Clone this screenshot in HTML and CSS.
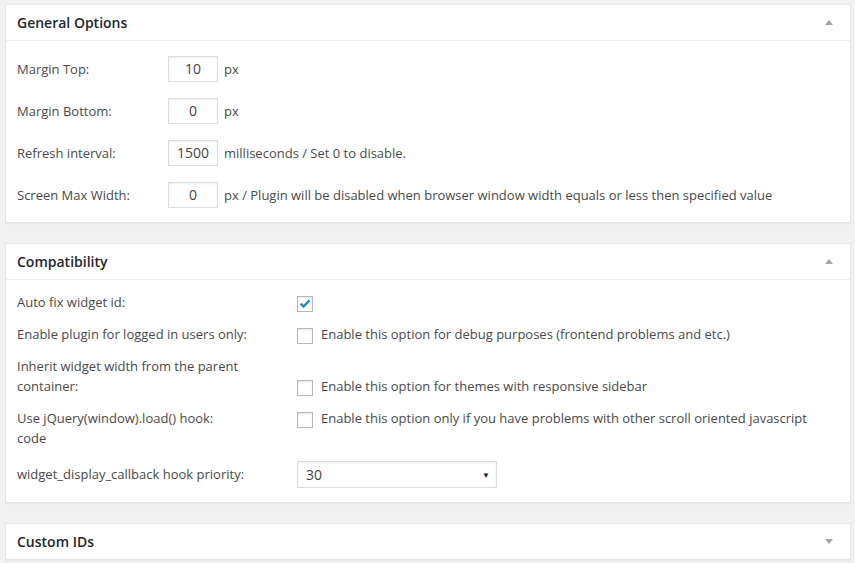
FILE: index.html
```html
<!DOCTYPE html>
<html>
<head>
<meta charset="utf-8">
<link rel="stylesheet" href="styles.css">
</head>
<body>
<div class="wrap">
  <div class="postbox">
    <div class="hndle">
      <span class="title">General Options</span>
      <span class="toggle up"></span>
    </div>
    <div class="inside general">
      <div class="label">Margin Top:</div>
      <div class="field"><span class="input">10</span><span class="note">px</span></div>
      <div class="label">Margin Bottom:</div>
      <div class="field"><span class="input">0</span><span class="note">px</span></div>
      <div class="label">Refresh interval:</div>
      <div class="field"><span class="input">1500</span><span class="note">milliseconds / Set 0 to disable.</span></div>
      <div class="label">Screen Max Width:</div>
      <div class="field"><span class="input">0</span><span class="note">px / Plugin will be disabled when browser window width equals or less then specified value</span></div>
    </div>
  </div>

  <div class="postbox">
    <div class="hndle">
      <span class="title">Compatibility</span>
      <span class="toggle up"></span>
    </div>
    <div class="inside compat">
      <div class="label">Auto fix widget id:</div>
      <div class="field"><span class="chk checked"><svg width="16" height="16" viewBox="0 0 16 16"><path d="M3.6 7.6 L6.6 10.6 L12.6 4.2" fill="none" stroke="#1e8cbe" stroke-width="2.4"/></svg></span></div>
      <div class="label">Enable plugin for logged in users only:</div>
      <div class="field"><span class="chk"></span><span class="desc">Enable this option for debug purposes (frontend problems and etc.)</span></div>
      <div class="label">Inherit widget width from the parent<br>container:</div>
      <div class="field end"><span class="chk"></span><span class="desc">Enable this option for themes with responsive sidebar</span></div>
      <div class="label">Use jQuery(window).load() hook:<br>code</div>
      <div class="field start"><span class="chk"></span><span class="desc">Enable this option only if you have problems with other scroll oriented javascript</span></div>
      <div class="label">widget_display_callback hook priority:</div>
      <div class="field"><div class="select"><span class="value">30</span><span class="caret">&#9660;</span></div></div>
    </div>
  </div>

  <div class="postbox closed">
    <div class="hndle">
      <span class="title">Custom IDs</span>
      <span class="toggle down"></span>
    </div>
  </div>
</div>
</body>
</html>
```

FILE: styles.css
```css
html, body {
  margin: 0;
  padding: 0;
  background: #f1f1f1;
}
body {
  font-family: "Open Sans", "Noto Sans", sans-serif;
  font-size: 13px;
  color: #4a4a4a;
}
.wrap {
  padding: 4px 4px 0 5px;
}
.postbox {
  background: #fff;
  border: 1px solid #e5e5e5;
  box-shadow: 0 1px 1px rgba(0,0,0,0.04);
  margin-bottom: 20px;
}
.hndle {
  height: 35px;
  display: flex;
  align-items: center;
  justify-content: space-between;
  padding: 0 12px 0 11px;
  border-bottom: 1px solid #eee;
}
.postbox.closed .hndle {
  border-bottom: none;
}
.title {
  font-size: 14px;
  font-weight: 600;
  color: #23282d;
}
.toggle {
  width: 0;
  height: 0;
  border-left: 4.5px solid transparent;
  border-right: 4.5px solid transparent;
  margin-right: 5px;
}
.toggle.up {
  border-bottom: 5px solid #a0a5aa;
}
.toggle.down {
  border-top: 5px solid #a0a5aa;
}
.inside {
  display: grid;
  align-items: center;
  line-height: 20px;
}
.inside.general {
  grid-template-columns: 151px 1fr;
  grid-auto-rows: 42px;
  padding: 7px 11px 6px 11px;
}
.inside.compat {
  grid-template-columns: 280px 1fr;
  row-gap: 12px;
  padding: 12px 11px 14px 11px;
}
.field {
  display: flex;
  align-items: center;
}
.field.end { align-self: end; }
.field.start { align-self: start; }
.input {
  box-sizing: border-box;
  width: 50px;
  height: 26px;
  border: 1px solid #ddd;
  box-shadow: inset 0 1px 2px rgba(0,0,0,0.07);
  text-align: center;
  line-height: 24px;
  font-size: 14px;
  color: #444;
}
.note {
  margin-left: 6px;
}
.chk {
  box-sizing: border-box;
  width: 16px;
  height: 16px;
  border: 1px solid #b4b9be;
  box-shadow: inset 0 1px 2px rgba(0,0,0,0.1);
  margin-top: 3px;
  flex: none;
  position: relative;
}
.chk svg {
  position: absolute;
  left: -1px;
  top: -1px;
}
.desc {
  margin-left: 8px;
}
.select {
  box-sizing: border-box;
  width: 200px;
  height: 27px;
  border: 1px solid #ddd;
  box-shadow: inset 0 1px 2px rgba(0,0,0,0.07);
  display: flex;
  align-items: center;
  justify-content: space-between;
  padding: 0 6px 0 8px;
  margin-top: 1px;
  font-size: 14px;
  color: #444;
}
.caret {
  font-size: 8px;
  color: #222;
}
```
